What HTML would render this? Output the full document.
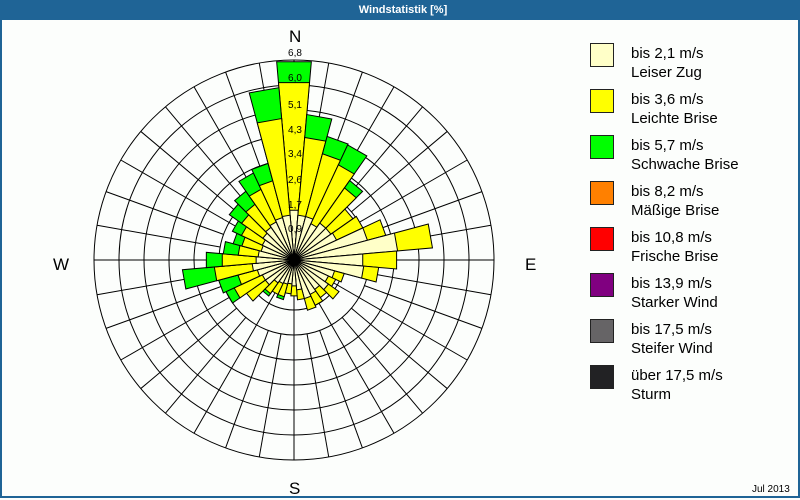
<!DOCTYPE html>
<html><head><meta charset="utf-8"><style>
html,body{margin:0;padding:0;}
body{width:800px;height:500px;position:relative;background:#fcfefc;overflow:hidden;font-family:"Liberation Sans",sans-serif;}
#frame{position:absolute;left:0;top:0;width:796px;height:496px;border:2px solid #1f6496;border-top:none;}
#title{position:absolute;left:0;top:0;width:800px;height:20px;background:#1f6496;color:#fff;font-weight:bold;font-size:11px;line-height:21px;text-align:center;}
#title span{position:relative;left:3px;}
.lg{position:absolute;left:590px;width:22px;height:22px;border:1px solid #222;}
.lt{position:absolute;left:631px;font-size:15px;line-height:18.5px;color:#000;white-space:nowrap;}
.cp{position:absolute;font-size:17px;color:#000;}
</style></head><body>
<div id="frame"></div>
<div id="title"><span>Windstatistik [%]</span></div>
<svg width="800" height="500" style="position:absolute;left:0;top:0">
<defs><polygon id="w" points="0,0 -0.0872,-0.9962 0.0872,-0.9962" stroke="#000" stroke-width="1" vector-effect="non-scaling-stroke"/></defs>
<g transform="translate(294,260)" fill="none" stroke="#000" stroke-width="1">
<circle r="25"/><circle r="50"/><circle r="75"/><circle r="100"/><circle r="125"/><circle r="150"/><circle r="175"/><circle r="200"/>
<g>
<line x1="0" y1="0" x2="0" y2="-200"/>
<line x1="0" y1="0" x2="0" y2="-200" transform="rotate(30)"/>
<line x1="0" y1="0" x2="0" y2="-200" transform="rotate(60)"/>
<line x1="0" y1="0" x2="0" y2="-200" transform="rotate(90)"/>
<line x1="0" y1="0" x2="0" y2="-200" transform="rotate(120)"/>
<line x1="0" y1="0" x2="0" y2="-200" transform="rotate(150)"/>
<line x1="0" y1="0" x2="0" y2="-200" transform="rotate(180)"/>
<line x1="0" y1="0" x2="0" y2="-200" transform="rotate(210)"/>
<line x1="0" y1="0" x2="0" y2="-200" transform="rotate(240)"/>
<line x1="0" y1="0" x2="0" y2="-200" transform="rotate(270)"/>
<line x1="0" y1="0" x2="0" y2="-200" transform="rotate(300)"/>
<line x1="0" y1="0" x2="0" y2="-200" transform="rotate(330)"/>
<line x1="0" y1="-75" x2="0" y2="-200" transform="rotate(10)"/>
<line x1="0" y1="-75" x2="0" y2="-200" transform="rotate(20)"/>
<line x1="0" y1="-75" x2="0" y2="-200" transform="rotate(40)"/>
<line x1="0" y1="-75" x2="0" y2="-200" transform="rotate(50)"/>
<line x1="0" y1="-75" x2="0" y2="-200" transform="rotate(70)"/>
<line x1="0" y1="-75" x2="0" y2="-200" transform="rotate(80)"/>
<line x1="0" y1="-75" x2="0" y2="-200" transform="rotate(100)"/>
<line x1="0" y1="-75" x2="0" y2="-200" transform="rotate(110)"/>
<line x1="0" y1="-75" x2="0" y2="-200" transform="rotate(130)"/>
<line x1="0" y1="-75" x2="0" y2="-200" transform="rotate(140)"/>
<line x1="0" y1="-75" x2="0" y2="-200" transform="rotate(160)"/>
<line x1="0" y1="-75" x2="0" y2="-200" transform="rotate(170)"/>
<line x1="0" y1="-75" x2="0" y2="-200" transform="rotate(190)"/>
<line x1="0" y1="-75" x2="0" y2="-200" transform="rotate(200)"/>
<line x1="0" y1="-75" x2="0" y2="-200" transform="rotate(220)"/>
<line x1="0" y1="-75" x2="0" y2="-200" transform="rotate(230)"/>
<line x1="0" y1="-75" x2="0" y2="-200" transform="rotate(250)"/>
<line x1="0" y1="-75" x2="0" y2="-200" transform="rotate(260)"/>
<line x1="0" y1="-75" x2="0" y2="-200" transform="rotate(280)"/>
<line x1="0" y1="-75" x2="0" y2="-200" transform="rotate(290)"/>
<line x1="0" y1="-75" x2="0" y2="-200" transform="rotate(310)"/>
<line x1="0" y1="-75" x2="0" y2="-200" transform="rotate(320)"/>
<line x1="0" y1="-75" x2="0" y2="-200" transform="rotate(340)"/>
<line x1="0" y1="-75" x2="0" y2="-200" transform="rotate(350)"/>
</g>
</g>
<g transform="translate(294,260)">
<g transform="rotate(0)"><use href="#w" transform="scale(199)" fill="#00ff00"/><use href="#w" transform="scale(178)" fill="#ffff00"/><use href="#w" transform="scale(50)" fill="#ffffc8"/></g>
<g transform="rotate(10)"><use href="#w" transform="scale(146)" fill="#00ff00"/><use href="#w" transform="scale(123)" fill="#ffff00"/><use href="#w" transform="scale(45)" fill="#ffffc8"/></g>
<g transform="rotate(20)"><use href="#w" transform="scale(128)" fill="#00ff00"/><use href="#w" transform="scale(110)" fill="#ffff00"/><use href="#w" transform="scale(45)" fill="#ffffc8"/></g>
<g transform="rotate(30)"><use href="#w" transform="scale(127)" fill="#00ff00"/><use href="#w" transform="scale(105)" fill="#ffff00"/><use href="#w" transform="scale(40)" fill="#ffffc8"/></g>
<g transform="rotate(40)"><use href="#w" transform="scale(97)" fill="#00ff00"/><use href="#w" transform="scale(88)" fill="#ffff00"/><use href="#w" transform="scale(45)" fill="#ffffc8"/></g>
<g transform="rotate(50)"><use href="#w" transform="scale(72)" fill="#ffff00"/><use href="#w" transform="scale(45)" fill="#ffffc8"/></g>
<g transform="rotate(60)"><use href="#w" transform="scale(76)" fill="#ffff00"/><use href="#w" transform="scale(47)" fill="#ffffc8"/></g>
<g transform="rotate(70)"><use href="#w" transform="scale(95)" fill="#ffff00"/><use href="#w" transform="scale(76)" fill="#ffffc8"/></g>
<g transform="rotate(80)"><use href="#w" transform="scale(139)" fill="#ffff00"/><use href="#w" transform="scale(104)" fill="#ffffc8"/></g>
<g transform="rotate(90)"><use href="#w" transform="scale(103)" fill="#ffff00"/><use href="#w" transform="scale(69)" fill="#ffffc8"/></g>
<g transform="rotate(100)"><use href="#w" transform="scale(85)" fill="#ffff00"/><use href="#w" transform="scale(70)" fill="#ffffc8"/></g>
<g transform="rotate(110)"><use href="#w" transform="scale(52)" fill="#ffff00"/><use href="#w" transform="scale(42)" fill="#ffffc8"/></g>
<g transform="rotate(120)"><use href="#w" transform="scale(46)" fill="#ffff00"/><use href="#w" transform="scale(38)" fill="#ffffc8"/></g>
<g transform="rotate(130)"><use href="#w" transform="scale(55)" fill="#ffff00"/><use href="#w" transform="scale(42)" fill="#ffffc8"/></g>
<g transform="rotate(140)"><use href="#w" transform="scale(46)" fill="#ffff00"/><use href="#w" transform="scale(36)" fill="#ffffc8"/></g>
<g transform="rotate(150)"><use href="#w" transform="scale(50)" fill="#ffff00"/><use href="#w" transform="scale(38)" fill="#ffffc8"/></g>
<g transform="rotate(160)"><use href="#w" transform="scale(52)" fill="#ffff00"/><use href="#w" transform="scale(40)" fill="#ffffc8"/></g>
<g transform="rotate(170)"><use href="#w" transform="scale(40)" fill="#ffff00"/><use href="#w" transform="scale(30)" fill="#ffffc8"/></g>
<g transform="rotate(180)"><use href="#w" transform="scale(36)" fill="#ffff00"/><use href="#w" transform="scale(26)" fill="#ffffc8"/></g>
<g transform="rotate(190)"><use href="#w" transform="scale(34)" fill="#ffff00"/><use href="#w" transform="scale(24)" fill="#ffffc8"/></g>
<g transform="rotate(200)"><use href="#w" transform="scale(41)" fill="#00ff00"/><use href="#w" transform="scale(38)" fill="#ffff00"/><use href="#w" transform="scale(25)" fill="#ffffc8"/></g>
<g transform="rotate(210)"><use href="#w" transform="scale(38)" fill="#ffff00"/><use href="#w" transform="scale(26)" fill="#ffffc8"/></g>
<g transform="rotate(220)"><use href="#w" transform="scale(44)" fill="#00ff00"/><use href="#w" transform="scale(41)" fill="#ffff00"/><use href="#w" transform="scale(28)" fill="#ffffc8"/></g>
<g transform="rotate(230)"><use href="#w" transform="scale(58)" fill="#ffff00"/><use href="#w" transform="scale(35)" fill="#ffffc8"/></g>
<g transform="rotate(240)"><use href="#w" transform="scale(75)" fill="#00ff00"/><use href="#w" transform="scale(66)" fill="#ffff00"/><use href="#w" transform="scale(35)" fill="#ffffc8"/></g>
<g transform="rotate(250)"><use href="#w" transform="scale(78)" fill="#00ff00"/><use href="#w" transform="scale(58)" fill="#ffff00"/><use href="#w" transform="scale(38)" fill="#ffffc8"/></g>
<g transform="rotate(260)"><use href="#w" transform="scale(112)" fill="#00ff00"/><use href="#w" transform="scale(80)" fill="#ffff00"/><use href="#w" transform="scale(42)" fill="#ffffc8"/></g>
<g transform="rotate(270)"><use href="#w" transform="scale(88)" fill="#00ff00"/><use href="#w" transform="scale(72)" fill="#ffff00"/><use href="#w" transform="scale(38)" fill="#ffffc8"/></g>
<g transform="rotate(280)"><use href="#w" transform="scale(71)" fill="#00ff00"/><use href="#w" transform="scale(56)" fill="#ffff00"/><use href="#w" transform="scale(36)" fill="#ffffc8"/></g>
<g transform="rotate(290)"><use href="#w" transform="scale(63)" fill="#00ff00"/><use href="#w" transform="scale(54)" fill="#ffff00"/><use href="#w" transform="scale(34)" fill="#ffffc8"/></g>
<g transform="rotate(300)"><use href="#w" transform="scale(68)" fill="#00ff00"/><use href="#w" transform="scale(58)" fill="#ffff00"/><use href="#w" transform="scale(35)" fill="#ffffc8"/></g>
<g transform="rotate(310)"><use href="#w" transform="scale(79)" fill="#00ff00"/><use href="#w" transform="scale(64)" fill="#ffff00"/><use href="#w" transform="scale(38)" fill="#ffffc8"/></g>
<g transform="rotate(320)"><use href="#w" transform="scale(84)" fill="#00ff00"/><use href="#w" transform="scale(68)" fill="#ffff00"/><use href="#w" transform="scale(40)" fill="#ffffc8"/></g>
<g transform="rotate(330)"><use href="#w" transform="scale(96)" fill="#00ff00"/><use href="#w" transform="scale(78)" fill="#ffff00"/><use href="#w" transform="scale(42)" fill="#ffffc8"/></g>
<g transform="rotate(340)"><use href="#w" transform="scale(100)" fill="#00ff00"/><use href="#w" transform="scale(82)" fill="#ffff00"/><use href="#w" transform="scale(44)" fill="#ffffc8"/></g>
<g transform="rotate(350)"><use href="#w" transform="scale(173)" fill="#00ff00"/><use href="#w" transform="scale(142)" fill="#ffff00"/><use href="#w" transform="scale(45)" fill="#ffffc8"/></g>
<circle r="4" fill="#000"/>
</g>
<g font-family="Liberation Sans, sans-serif" font-size="10" text-anchor="middle" fill="#000">
<text x="295" y="232">0,9</text>
<text x="295" y="208">1,7</text>
<text x="295" y="183">2,6</text>
<text x="295" y="157">3,4</text>
<text x="295" y="133">4,3</text>
<text x="295" y="108">5,1</text>
<text x="295" y="81">6,0</text>
<text x="295" y="56">6,8</text>
</g>
</svg>
<div class="cp" style="left:289px;top:27px">N</div>
<div class="cp" style="left:53px;top:255px">W</div>
<div class="cp" style="left:525px;top:255px">E</div>
<div class="cp" style="left:289px;top:479px">S</div>

<div class="lg" style="top:43px;background:#ffffc8"></div>
<div class="lt" style="top:45px">bis 2,1 m/s<br>Leiser Zug</div>
<div class="lg" style="top:89px;background:#ffff00"></div>
<div class="lt" style="top:91px">bis 3,6 m/s<br>Leichte Brise</div>
<div class="lg" style="top:135px;background:#00ff00"></div>
<div class="lt" style="top:137px">bis 5,7 m/s<br>Schwache Brise</div>
<div class="lg" style="top:181px;background:#ff8000"></div>
<div class="lt" style="top:183px">bis 8,2 m/s<br>Mäßige Brise</div>
<div class="lg" style="top:227px;background:#ff0000"></div>
<div class="lt" style="top:229px">bis 10,8 m/s<br>Frische Brise</div>
<div class="lg" style="top:273px;background:#800080"></div>
<div class="lt" style="top:275px">bis 13,9 m/s<br>Starker Wind</div>
<div class="lg" style="top:319px;background:#666466"></div>
<div class="lt" style="top:321px">bis 17,5 m/s<br>Steifer Wind</div>
<div class="lg" style="top:365px;background:#222224"></div>
<div class="lt" style="top:367px">über 17,5 m/s<br>Sturm</div>

<div style="position:absolute;left:752px;top:484px;font-size:10px;color:#000">Jul 2013</div>
</body></html>
